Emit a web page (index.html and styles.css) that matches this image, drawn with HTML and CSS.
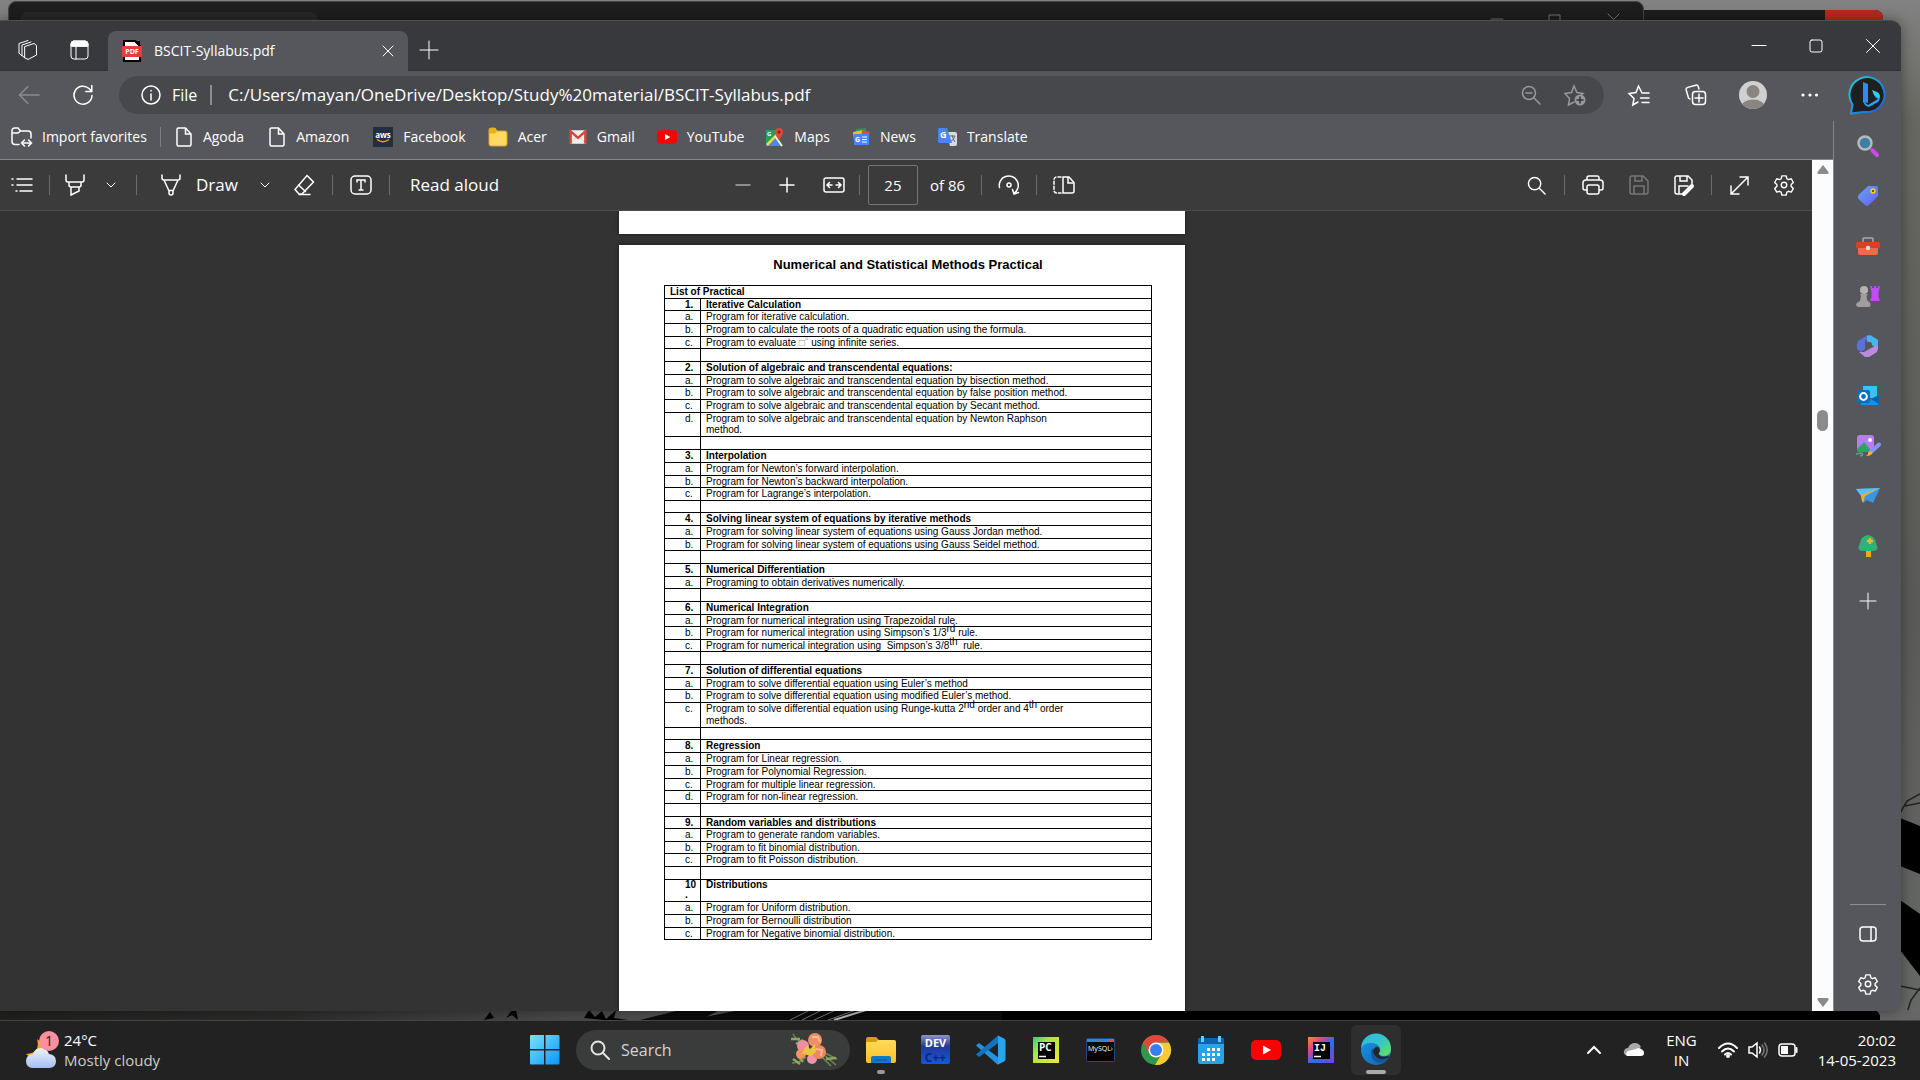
FILE: index.html
```html
<!DOCTYPE html>
<html lang="en">
<head>
<meta charset="utf-8">
<title>BSCIT-Syllabus.pdf</title>
<link rel="stylesheet" href="styles.css">
</head>
<body>
<svg class="defs" aria-hidden="true">
  <defs>
    <symbol id="gear" viewBox="0 0 24 24"><path d="M9.6 2h4.8l.7 3.2 1.7 1 3.1-1 2.3 4.100-2.400 2.200v2l2.400 2.200-2.300 4.100-3.100-1-1.700 1-.7 3.200H9.600l-.7-3.200-1.700-1-3.100 1-2.300-4.100 2.400-2.200v-2L1.800 9.300l2.300-4.100 3.100 1 1.700-1z" stroke-linejoin="round"/><circle cx="12" cy="12" r="3"/></symbol>
    <symbol id="file" viewBox="0 0 16 20"><path d="M2.500 1h7l5.500 6v10.500a1.500 1.500 0 0 1-1.500 1.500h-11A1.500 1.500 0 0 1 1 17.500v-15A1.500 1.500 0 0 1 2.500 1zM9.500 1v6H15"/></symbol>
    <symbol id="yt" viewBox="0 0 30 20"><rect width="30" height="20" rx="5" fill="#f00"/><path d="M12 5.500v9l8-4.500z" fill="#fff"/></symbol>
    <symbol id="lens" viewBox="0 0 20 20"><circle cx="8" cy="8" r="6.500"/><path d="M13 13l6 6"/></symbol>
    <linearGradient id="edgeA" x1="0" y1="0" x2="1" y2="1"><stop offset="0" stop-color="#2fb4e8"/><stop offset=".5" stop-color="#35c6c9"/><stop offset="1" stop-color="#6be24e"/></linearGradient>
    <linearGradient id="edgeB" x1="0" y1="0" x2="1" y2="1"><stop offset="0" stop-color="#1899e0"/><stop offset="1" stop-color="#1160b7"/></linearGradient>
    <linearGradient id="win" x1="0" y1="0" x2="1" y2="1"><stop offset="0" stop-color="#7be0fb"/><stop offset="1" stop-color="#0a95fb"/></linearGradient>
    <linearGradient id="bing" x1="0" y1="0" x2="1" y2="1"><stop offset="0" stop-color="#1fd0e0"/><stop offset="1" stop-color="#1c55e0"/></linearGradient>
    <linearGradient id="dev" x1="0" y1="0" x2="0" y2="1"><stop offset="0" stop-color="#8f95c4"/><stop offset=".4" stop-color="#24379a"/><stop offset="1" stop-color="#1259e0"/></linearGradient>
    <linearGradient id="pc" x1="0" y1="0" x2="1" y2="1"><stop offset="0" stop-color="#21d789"/><stop offset=".35" stop-color="#a6e83c"/><stop offset="1" stop-color="#f3e63b"/></linearGradient>
    <linearGradient id="ij" x1="0" y1="0" x2="1" y2="1"><stop offset="0" stop-color="#fc8a2e"/><stop offset=".3" stop-color="#e0408a"/><stop offset=".55" stop-color="#2b6df0"/><stop offset="1" stop-color="#8040d0"/></linearGradient>
    <linearGradient id="tag" x1="0" y1="0" x2="1" y2="1"><stop offset="0" stop-color="#5fa8f5"/><stop offset="1" stop-color="#6a5cf0"/></linearGradient>
    <linearGradient id="fold" x1="0" y1="0" x2="0" y2="1"><stop offset="0" stop-color="#ffda5c"/><stop offset="1" stop-color="#fcc024"/></linearGradient>
    <linearGradient id="cloud" x1="0" y1="0" x2="0" y2="1"><stop offset="0" stop-color="#eef4ff"/><stop offset="1" stop-color="#a4bff0"/></linearGradient>
  </defs>
</svg>

<div class="desktop">
  <svg class="wall-right" viewBox="0 0 20 1020" preserveAspectRatio="none" aria-hidden="true">
    <path d="M0 818l20 8v48l-20-8zM0 900l20 14v62l-20-26z" fill="#000"/>
    <path d="M0 813l7-12 13-7M5 806l15-3M0 986l20 4M6 1016l5-16 9-12" fill="none" stroke="#222" stroke-width="1.500"/>
  </svg>
  <svg class="wall-bottom" viewBox="0 0 1920 10" preserveAspectRatio="none" aria-hidden="true">
    <path d="M484 10l6-8 4 6zM506 8l6-8 4 0 2 10-6-5zM584 8l5-8 6 7 7-6 4 8 10-9-2 8 14 2h-24z" fill="#000"/>
    <path d="M640 10l40-10h40l-20 10zM690 10l50-10h262v10z" fill="#0b0b0b"/>
    <path d="M790 10l20-10M802 10l20-10M814 10l22-10M828 10l28-10" stroke="#777" stroke-width="1"/>
    <path d="M834 10l32-10" stroke="#bbb" stroke-width="2"/>
    <path d="M1002 0h870q8 0 8 8v2h-878z" fill="#000"/>
  </svg>
  <div class="back-window far"><span class="red-close"></span></div>
  <div class="back-window near">
    <span class="back-tab"></span>
    <svg width="172" height="18" viewBox="0 0 172 18" class="ln" aria-hidden="true"><path d="M20 17h12M78 20v-7h11v7M137 12l11 11M148 12l-11 11"/></svg>
  </div>

  <main class="browser">
    <header class="tabs">
      <button class="ic" aria-label="Workspaces"><svg class="ln" width="22" height="22" viewBox="0 0 22 22"><path d="M9 7.500l9-3 2.500 2v9.500L12 20.500 9 19zM6 16.500V6l9-3M3 14V4.500L12 1.500M3 14l3 3M6 16.500l3 2.500"/></svg></button>
      <button class="ic" aria-label="Tab actions"><svg class="ln" width="20" height="20" viewBox="0 0 20 20"><rect x="1" y="1" width="17" height="18" rx="3"/><path d="M6 6v13"/><path d="M1 6V4q0-3 3-3h11q3 0 3 3v2z" fill="#fff"/></svg></button>
      <div class="tab">
        <svg width="20" height="20" viewBox="0 0 20 20" aria-hidden="true"><path d="M2 0h11l5 5v15H2z" fill="#fff" stroke="#000" stroke-width="2"/><path d="M12 0l6 6V0z" fill="#000"/><rect y="5" width="20" height="11" rx="1" fill="#e93c3c"/><text x="10" y="13" font-size="7" text-anchor="middle" class="svgb" fill="#fff">PDF</text></svg>
        <span class="tab-title">BSCIT-Syllabus.pdf</span>
        <button class="tab-close" aria-label="Close tab"><svg class="ln" width="12" height="12" viewBox="0 0 12 12"><path d="M1 1l10 10M11 1L1 11"/></svg></button>
      </div>
      <button class="newtab" aria-label="New tab"><svg class="ln" width="18" height="18" viewBox="0 0 18 18"><path d="M9 0v18M0 9h18"/></svg></button>
      <div class="caption">
        <button aria-label="Minimize"><svg class="ln" width="14" height="14" viewBox="0 0 14 14"><path d="M0 6.500h14"/></svg></button>
        <button aria-label="Maximize"><svg class="ln" width="14" height="14" viewBox="0 0 14 14"><rect x="1" y="1" width="12" height="12" rx="2"/></svg></button>
        <button aria-label="Close"><svg class="ln" width="14" height="14" viewBox="0 0 14 14"><path d="M.5.5l13 13M13.500.5l-13 13"/></svg></button>
      </div>
    </header>

    <div class="frame">
      <div class="column">
        <nav class="address-row">
          <button class="nav dim" aria-label="Back"><svg class="ln thick" width="22" height="20" viewBox="0 0 22 20"><path d="M21 10H2M10 1.500L1.500 10l8.500 8.500"/></svg></button>
          <button class="nav" aria-label="Refresh"><svg class="ln thick" width="20" height="20" viewBox="0 0 20 20"><path d="M19 10.500A9 9 0 1 1 16 3.500L18.500 6M18.800.5V6.500h-6"/></svg></button>
          <div class="pill">
            <svg class="ln thick" width="20" height="20" viewBox="0 0 20 20" aria-hidden="true"><circle cx="10" cy="10" r="9"/><path d="M10 9v6M10 5.500v.5"/></svg>
            <span class="scheme">File</span>
            <input class="url" aria-label="Address" value="C:/Users/mayan/OneDrive/Desktop/Study%20material/BSCIT-Syllabus.pdf">
            <button class="pill-btn" aria-label="Zoom out"><svg class="ln thick" width="20" height="20" viewBox="0 0 20 20"><circle cx="8" cy="8" r="6.500"/><path d="M13 13l6 6M5 8h6"/></svg></button>
            <button class="pill-btn" aria-label="Add to favorites"><svg class="ln thick" width="22" height="22" viewBox="0 0 22 22"><path d="M10 18l-5.500 3 1-6.500L1 9.500l6.500-1L10 2l3 6.500 6 1-2 1.500"/><circle cx="16" cy="16" r="5.500" fill="#97989a" stroke="none"/><path d="M16 13v6M13 16h6" stroke="#333"/></svg></button>
          </div>
          <div class="tools">
            <button aria-label="Favorites"><svg class="ln thick" width="22" height="22" viewBox="0 0 22 22"><path d="M21 9h-7l-3.500-7L8 8.500l-7 1 5 5-1.200 6.500L10 18M12.500 14H21M14 18.500h7"/></svg></button>
            <button aria-label="Collections"><svg class="ln thick" width="22" height="22" viewBox="0 0 22 22"><rect x="7.500" y="7.500" width="13" height="13" rx="3"/><path d="M14 10v8M10 14h8M5 15L3.500 14 1.200 6q-.4-2 1.500-2.600l8-2.200q2-.5 2.600 1.500L14 5"/></svg></button>
            <button aria-label="Profile"><svg width="28" height="28" viewBox="0 0 28 28"><clipPath id="av"><circle cx="14" cy="14" r="14"/></clipPath><g clip-path="url(#av)"><rect width="28" height="28" fill="#d2d0ce"/><circle cx="14" cy="10.500" r="6.500" fill="#8a8583"/><ellipse cx="14" cy="26" rx="12" ry="7.500" fill="#8a8583"/></g></svg></button>
            <button aria-label="Settings and more"><svg width="18" height="6" viewBox="0 0 18 6" fill="#fff"><circle cx="2" cy="3" r="1.600"/><circle cx="9" cy="3" r="1.600"/><circle cx="15.500" cy="3" r="1.600"/></svg></button>
          </div>
        </nav>

        <nav class="bookmarks">
          <a href="#"><svg class="ln thick" width="21" height="20" viewBox="0 0 21 20"><path d="M8 17.500H4A3 3 0 0 1 1 14.500v-11A2.500 2.500 0 0 1 3.500 1H7l2.500 3H17a3 3 0 0 1 3 3v4M1 6h6l2.500-2M11 16h9M13.500 13L10.500 16l3 3M17.500 13l3 3-3 3"/></svg>Import favorites</a>
          <span class="bm-sep"></span>
          <a href="#" class="site"><svg class="ln thick" width="18" height="20"><use href="#file"/></svg>Agoda</a>
          <a href="#" class="site"><svg class="ln thick" width="18" height="20"><use href="#file"/></svg>Amazon</a>
          <a href="#"><svg width="20" height="20" viewBox="0 0 20 20"><rect width="20" height="20" fill="#222e3e"/><text x="10" y="11" font-size="8" text-anchor="middle" class="svgb" fill="#fff">aws</text><path d="M4 12.500q6 4.500 12 0" fill="none" stroke="#f79a1e" stroke-width="1.500"/></svg>Facebook</a>
          <a href="#"><svg width="20" height="20" viewBox="0 0 20 20"><path d="M1 3q0-2 2-2h4l2 3h8q2 0 2 2v11q0 2-2 2H3q-2 0-2-2z" fill="#ffd966" stroke="#d9a514"/><path d="M1 6.500h6l2-2.500-2-3H3Q1 1 1 3z" fill="#e8b21c"/></svg>Acer</a>
          <a href="#"><svg width="18" height="16" viewBox="0 0 19 16"><path d="M1 1h17v14H1z" fill="#f0f0f0"/><path d="M1 15l7-7M18 15l-7-7" stroke="#ccc"/><path d="M1.800 15V2l7.700 7 7.700-7v13" fill="none" stroke="#d9453a" stroke-width="2.500"/></svg>Gmail</a>
          <a href="#"><svg width="20" height="14"><use href="#yt"/></svg>YouTube</a>
          <a href="#"><svg width="18" height="18" viewBox="0 0 18 18"><path d="M0 2h12v14H0z" fill="#25a05a"/><path d="M0 16L9 8l8 10H0z" fill="#4a86f0"/><path d="M0 16L10 6l3 0-11 12z" fill="#fbd34a"/><path d="M9 8l7 10" stroke="#eee" stroke-width="2"/><path d="M13 12Q9 7 9 4a4 4 0 0 1 8 0q0 3-4 8z" fill="#e0473a"/><circle cx="13" cy="4" r="1.500" fill="#7d231c"/><text x="1" y="8" font-size="6" class="svgb" fill="#fff">G</text></svg>Maps</a>
          <a href="#"><svg width="18" height="18" viewBox="0 0 18 18"><path d="M4 1l10-1v8H4z" fill="#1e9b57"/><path d="M1 4l10-2 2 8-11 2z" fill="#f9bd1b"/><path d="M10 2l8 2-2 7H9z" fill="#e2483c"/><rect x="2" y="6" width="15" height="11" rx="1" fill="#4a86f0"/><text x="3" y="14" font-size="7" class="svgb" fill="#fff">G</text><path d="M10 9h5M10 11.500h5M10 14h5" stroke="#fff"/></svg>News</a>
          <a href="#"><svg width="19" height="20" viewBox="0 0 19 20"><path d="M8 5h9q2 0 2 2v10q0 2-2 2h-5z" fill="#d9dbe0"/><path d="M11 9h6M14 8q1 4 3 7M17 9q-1 4-5 6" stroke="#667" fill="none"/><path d="M1 1h8l5 15H2q-2 0-2-2V3q0-2 1-2z" fill="#4a86f0"/><text x="2" y="11" font-size="9" class="svgb" fill="#fff">G</text></svg>Translate</a>
        </nav>

        <section class="viewer-wrap">
          <div class="viewer">
            <div class="pdfbar">
              <div class="pdf-group side">
                <button class="contents" aria-label="Contents"><svg class="ln thick" width="22" height="16" viewBox="0 0 22 16"><path d="M6 2h15M6 8h15M9 14h12M1 2h1M1 8h1M5 14h1"/></svg></button>
                <i class="sep"></i>
                <button class="w50" aria-label="Highlight"><svg class="ln thick" width="20" height="22" viewBox="0 0 20 22"><path d="M1 1v5q0 2 2 2h14q2 0 2-2V1M4 8v3q0 2 2 2h8q2 0 2-2V8M6 13v8l8-4v-4"/></svg></button>
                <button class="w22" aria-label="Highlight options"><svg class="ln" width="10" height="6" viewBox="0 0 10 6"><path d="M1 1l4 4 4-4"/></svg></button>
                <i class="sep gap14"></i>
                <button class="draw"><svg class="ln thick" width="20" height="22" viewBox="0 0 20 22"><path d="M1 1v3q0 2 2 2h14q2 0 2-2V1M3 6l5 11v2q0 2 2 2t2-2v-2l5-11M8 16.500h4"/></svg>Draw</button>
                <button class="w22" aria-label="Draw options"><svg class="ln" width="10" height="6" viewBox="0 0 10 6"><path d="M1 1l4 4 4-4"/></svg></button>
                <button class="w56" aria-label="Erase"><svg class="ln thick" width="21" height="22" viewBox="0 0 21 22"><path d="M13 1.500l6.500 6.500L8 20H5L1 15.500zM4.500 11l7 6.500M5 20.500h11"/></svg></button>
                <i class="sep"></i>
                <button class="w56" aria-label="Add text"><svg class="ln thick" width="22" height="20" viewBox="0 0 22 20"><rect x="1" y="1" width="20" height="18" rx="4"/><path d="M7 7V5h8v2M11 5v10M9 15h4"/></svg></button>
                <i class="sep"></i>
                <button class="read">Read aloud</button>
              </div>
              <div class="pdf-group">
                <button class="w44" aria-label="Zoom out"><svg class="ln thick dim" width="14" height="14" viewBox="0 0 14 14"><path d="M0 7h14"/></svg></button>
                <button class="w44" aria-label="Zoom in"><svg class="ln thick" width="14" height="14" viewBox="0 0 14 14"><path d="M0 7h14M7 0v14"/></svg></button>
                <button class="w50" aria-label="Fit to width"><svg class="ln thick" width="22" height="16" viewBox="0 0 22 16"><rect x="1" y="1" width="20" height="14" rx="2"/><path d="M4 8h5M13 8h5M6.500 5.500L4 8l2.500 2.500M15.500 5.500L18 8l-2.500 2.500"/></svg></button>
                <i class="sep"></i>
                <label class="pageno"><input value="25" aria-label="Page number"><span>of 86</span></label>
                <i class="sep"></i>
                <button class="w54" aria-label="Rotate"><svg class="ln thick" width="22" height="22" viewBox="0 0 22 22"><path d="M1.500 13.500A9.500 9.500 0 1 1 16.500 19M14.500 15.500l1.500 4.500 4.500-1.500"/><circle cx="11" cy="11" r="2"/></svg></button>
                <i class="sep"></i>
                <button class="w54" aria-label="Page view"><svg class="ln thick" width="22" height="18" viewBox="0 0 22 18"><path d="M8 1H4Q1 1 1 4v10q0 3 3 3h4" stroke-dasharray="3 2"/><path d="M10 1h6l5 5.500V15q0 2-2 2h-9zM15 1v6h6"/></svg></button>
              </div>
              <div class="pdf-group side end">
                <button class="w56" aria-label="Find"><svg class="ln thick" width="19" height="19"><use href="#lens"/></svg></button>
                <i class="sep"></i>
                <button class="w56" aria-label="Print"><svg class="ln thick" width="22" height="20" viewBox="0 0 22 20"><path d="M5 15H3q-2 0-2-2V8q0-3 3-3h14q3 0 3 3v5q0 2-2 2h-2M5 5V3q0-2 2-2h8q2 0 2 2v2"/><rect x="5" y="10" width="12" height="9" rx="2"/></svg></button>
                <button class="w36 dim" aria-label="Save"><svg class="ln thick" width="20" height="20" viewBox="0 0 20 20"><path d="M3 1h11l5 5v11q0 2-2 2H3q-2 0-2-2V3q0-2 2-2zM6 1v5h7V1M5 19v-8h10v8"/></svg></button>
                <button class="w54" aria-label="Save as"><svg class="ln thick" width="20" height="20" viewBox="0 0 20 20"><path d="M8 19H3q-2 0-2-2V3q0-2 2-2h11l4 4v4M6 1v5h7V1M5 18v-7h9"/><path d="M10 19l8-8" stroke-width="4"/></svg></button>
                <i class="sep"></i>
                <button class="w54" aria-label="Full screen"><svg class="ln thick" width="19" height="19" viewBox="0 0 19 19"><path d="M1.500 17.500l16-16M10 1h8v8M1 10v8h8"/></svg></button>
                <button class="w36" aria-label="Settings"><svg class="ln thick" width="22" height="22"><use href="#gear"/></svg></button>
              </div>
            </div>
            <div class="pages">
              <div class="page previous"></div>
              <article class="page">
                <h1>Numerical and Statistical Methods Practical</h1>
                <table>
                  <colgroup><col class="num"><col></colgroup>
                  <tbody>
                  <tr><th colspan="2" class="list">List of Practical</th></tr>
                  <tr class="t"><th>1.</th><th>Iterative Calculation</th></tr>
                  <tr><td>a.</td><td>Program for iterative calculation.</td></tr>
                  <tr><td>b.</td><td>Program to calculate the roots of a quadratic equation using the formula.</td></tr>
                  <tr class="t"><td>c.</td><td>Program to evaluate <span class="glyph">□<sup>▫</sup></span> using infinite series.</td></tr>
                  <tr><td></td><td></td></tr>
                  <tr><th>2.</th><th>Solution of algebraic and transcendental equations:</th></tr>
                  <tr class="t"><td>a.</td><td>Program to solve algebraic and transcendental equation by bisection method.</td></tr>
                  <tr><td>b.</td><td>Program to solve algebraic and transcendental equation by false position method.</td></tr>
                  <tr><td>c.</td><td>Program to solve algebraic and transcendental equation by Secant method.</td></tr>
                  <tr class="two"><td>d.</td><td>Program to solve algebraic and transcendental equation by Newton Raphson<br>method.</td></tr>
                  <tr><td></td><td></td></tr>
                  <tr><th>3.</th><th>Interpolation</th></tr>
                  <tr><td>a.</td><td>Program for Newton’s forward interpolation.</td></tr>
                  <tr class="t"><td>b.</td><td>Program for Newton’s backward interpolation.</td></tr>
                  <tr><td>c.</td><td>Program for Lagrange’s interpolation.</td></tr>
                  <tr class="t"><td></td><td></td></tr>
                  <tr><th>4.</th><th>Solving linear system of equations by iterative methods</th></tr>
                  <tr><td>a.</td><td>Program for solving linear system of equations using Gauss Jordan method.</td></tr>
                  <tr class="t"><td>b.</td><td>Program for solving linear system of equations using Gauss Seidel method.</td></tr>
                  <tr><td></td><td></td></tr>
                  <tr><th>5.</th><th>Numerical Differentiation</th></tr>
                  <tr class="t"><td>a.</td><td>Programing to obtain derivatives numerically.</td></tr>
                  <tr><td></td><td></td></tr>
                  <tr><th>6.</th><th>Numerical Integration</th></tr>
                  <tr class="t"><td>a.</td><td>Program for numerical integration using Trapezoidal rule.</td></tr>
                  <tr><td>b.</td><td>Program for numerical integration using Simpson’s 1/3<sup>rd</sup> rule.</td></tr>
                  <tr class="t"><td>c.</td><td>Program for numerical integration using&nbsp; Simpson’s 3/8<sup>th</sup>&nbsp; rule.</td></tr>
                  <tr><td></td><td></td></tr>
                  <tr><th>7.</th><th>Solution of differential equations</th></tr>
                  <tr class="t"><td>a.</td><td>Program to solve differential equation using Euler’s method</td></tr>
                  <tr><td>b.</td><td>Program to solve differential equation using modified Euler’s method.</td></tr>
                  <tr class="two tall"><td>c.</td><td>Program to solve differential equation using Runge-kutta 2<sup>nd</sup> order and 4<sup>th</sup> order<br>methods.</td></tr>
                  <tr class="t"><td></td><td></td></tr>
                  <tr><th>8.</th><th>Regression</th></tr>
                  <tr><td>a.</td><td>Program for Linear regression.</td></tr>
                  <tr><td>b.</td><td>Program for Polynomial Regression.</td></tr>
                  <tr class="t"><td>c.</td><td>Program for multiple linear regression.</td></tr>
                  <tr><td>d.</td><td>Program for non-linear regression.</td></tr>
                  <tr><td></td><td></td></tr>
                  <tr class="t"><th>9.</th><th>Random variables and distributions</th></tr>
                  <tr><td>a.</td><td>Program to generate random variables.</td></tr>
                  <tr class="t"><td>b.</td><td>Program to fit binomial distribution.</td></tr>
                  <tr><td>c.</td><td>Program to fit Poisson distribution.</td></tr>
                  <tr><td></td><td></td></tr>
                  <tr class="ten"><th>10<br>.</th><th>Distributions</th></tr>
                  <tr><td>a.</td><td>Program for Uniform distribution.</td></tr>
                  <tr><td>b.</td><td>Program for Bernoulli distribution</td></tr>
                  <tr class="t"><td>c.</td><td>Program for Negative binomial distribution.</td></tr>
                  </tbody>
                </table>
              </article>
            </div>
          </div>
          <div class="scroll" aria-hidden="true">
            <svg width="12" height="9" viewBox="0 0 12 9"><path d="M6 0l5.500 7q.5 2-1 2h-9Q0 9 .5 7z" fill="#8b8b8b"/></svg>
            <div class="track"><div class="above"></div><div class="thumb"></div><div class="below"></div></div>
            <svg width="12" height="9" viewBox="0 0 12 9"><path d="M6 9L.5 2Q0 0 1.500 0h9q1.500 0 1 2z" fill="#8b8b8b"/></svg>
          </div>
        </section>
      </div>

      <aside class="sidebar">
        <button class="bing" aria-label="Discover"><svg width="38" height="40" viewBox="-2 0 38 40"><path d="M1 37.500l1.500-9A17.500 17.500 0 1 1 19.500 36q-4 0-6 0z" fill="#1f1f1f" stroke="url(#bing)" stroke-width="2"/><path d="M13 6l5 2v19l-5-1z" fill="#2f8bf2"/><path d="M13 25q1 5 6 6l9-5q3-3 1-7l-6-3 2 5 3 2-10 6z" fill="#2ba2f0"/><path d="M22 14l5 2q4 2 2.500 6L24 19z" fill="#2fd3e4"/></svg></button>
        <div class="side-list">
          <button aria-label="Search"><svg width="22" height="22" viewBox="0 0 22 22"><path d="M14 14l3 3" stroke="#aaa" stroke-width="2"/><circle cx="8" cy="8" r="6.500" fill="#3a80a8" stroke="#b9b9b9" stroke-width="2.500"/><path d="M15.500 15.500l4.500 4.500" stroke="#cf45ee" stroke-width="4" stroke-linecap="round"/></svg></button>
          <button aria-label="Shopping"><svg width="22" height="22" viewBox="0 0 22 22"><path d="M11 1h8q2 0 2 2v8L12 20q-2 2-4 0l-6.500-6q-1.500-2 0-4z" fill="url(#tag)"/><circle cx="16" cy="6" r="2.800" fill="#f4c71d"/><circle cx="16" cy="6" r="1" fill="#333"/></svg></button>
          <button aria-label="Tools"><svg width="24" height="18" viewBox="0 0 24 18"><path d="M7 5V2q0-1 1-1h8q1 0 1 1v3" fill="none" stroke="#a9a9a9" stroke-width="1.500"/><path d="M2 10h20v6q0 2-2 2H4q-2 0-2-2z" fill="#ef6b45"/><rect y="5" width="24" height="6" rx="1" fill="#d2451e"/><circle cx="12" cy="11" r="2.200" fill="#ddd"/></svg></button>
          <button aria-label="Games"><svg width="24" height="22" viewBox="0 0 24 22"><path d="M14 1h2v2h2V1h2v2h2V1h2l-1.500 6v5l1.500 4H14l1.500-4V7z" fill="#c04cf5"/><circle cx="8" cy="5" r="4" fill="#b5b3b1"/><path d="M4 9h8l-1.500 2 1 5q3 1 3 3.500T13 22H2q-2-1-2-2.500T4 16l1-5z" fill="#a19f9d"/></svg></button>
          <button aria-label="Microsoft 365"><svg width="24" height="22" viewBox="0 0 24 22"><path d="M2 6l9-5.500h6L9 6v8l-4 3-4-3q-1-4 1-8z" fill="#5b70d8"/><path d="M11 .5h4l7 4.500v9l-6-4q0-4-5-3z" fill="#43b7ec"/><path d="M22 10v4l-1 3-8 5H9l-6-5 5 0 9-5z" fill="#b98ade"/></svg></button>
          <button aria-label="Outlook"><svg width="22" height="20" viewBox="0 0 22 20"><path d="M6 0h14v12H6z" fill="#37c2f2"/><path d="M4 19V9l8 5 10-5v8q0 2-2 2z" fill="#1a8fdd"/><path d="M22 9v9l-8-5z" fill="#0f5fa8"/><rect y="4" width="13" height="13" rx="2" fill="#0e6cc4"/><circle cx="6.500" cy="10.500" r="3.400" fill="none" stroke="#fff" stroke-width="2"/></svg></button>
          <button aria-label="Image creator"><svg width="24" height="22" viewBox="0 0 24 22"><rect x="1" width="17" height="17" rx="3" fill="#b67cf3"/><path d="M1 14l7-7 8 10H4q-3 0-3-3z" fill="#2aa564"/><circle cx="14" cy="5" r="2" fill="#fff"/><path d="M23 9.500L15 17" stroke="#8694f5" stroke-width="4" stroke-linecap="round"/><path d="M9 21q4-1 3-4l4-1q2 5-7 5z" fill="#f0b23a"/><path d="M0 19l6-1q2 2-2 3" fill="none" stroke="#36ba78" stroke-width="1.500"/></svg></button>
          <button aria-label="Drop"><svg width="24" height="16" viewBox="0 0 24 16"><path d="M0 1l24-1-7 15-6-3-4 3-2-8z" fill="#3895e8"/><path d="M0 1l24-1L5 8z" fill="#5cc0f6"/><path d="M5 7L24 0 9 8l-2 7q-2-3-2-8z" fill="#efb12b"/></svg></button>
          <button aria-label="E-tree"><svg width="20" height="22" viewBox="0 0 20 22"><rect x="8" y="14" width="5" height="8" fill="#f0a823"/><path d="M10 0q7 1 8 8 4 8-3 8H5Q-2 16 2 8q1-7 8-8z" fill="#2fb177"/><path d="M12 3v6M9 6h6" stroke="#f6b52a" stroke-width="2.500"/></svg></button>
          <button aria-label="Customize"><svg class="ln" width="16" height="16" viewBox="0 0 16 16"><path d="M8 0v16M0 8h16"/></svg></button>
        </div>
        <div class="side-foot">
          <button aria-label="Hide sidebar"><svg class="ln thick" width="18" height="16" viewBox="0 0 18 16"><rect x="1" y="1" width="16" height="14" rx="3"/><path d="M12 1v14"/></svg></button>
          <button aria-label="Settings"><svg class="ln thick" width="22" height="22"><use href="#gear"/></svg></button>
        </div>
      </aside>
    </div>
  </main>
</div>

<footer class="taskbar">
  <button class="weather">
    <svg width="32" height="38" viewBox="0 0 32 38" aria-hidden="true"><path d="M12 8q4 14-11 15 6 6 13 2t5-11z" fill="#f5a52b"/><path d="M7 37q-6-1-6-7t7-7q2-6 8-6t8 6q7 1 7 7t-6 7z" fill="url(#cloud)"/><circle cx="24" cy="10" r="10" fill="#fc8f9e"/><text x="24" y="15" font-size="14" text-anchor="middle" fill="#222">1</text></svg>
    <span class="lines"><span>24°C</span><span class="soft">Mostly cloudy</span></span>
  </button>
  <nav class="apps">
    <button aria-label="Start"><svg width="30" height="30" viewBox="0 0 30 30"><path d="M0 1q0-1 1-1h13v14H0zM15.500 0H28q1.500 0 1.500 1v13h-14zM0 15.500h14V29.500H1q-1 0-1-1zM15.500 15.500h14V28q0 1.500-1 1.500h-13z" fill="url(#win)"/></svg></button>
    <label class="search"><svg class="ln" width="20" height="20"><use href="#lens"/></svg><input placeholder="Search" aria-label="Search">
      <svg width="48" height="34" viewBox="0 0 48 34" aria-hidden="true"><path d="M3 1q4 8 14 10M2 30q8 0 14-6M34 22l12 10M32 24l9 9M35 20l12 6" fill="none" stroke="#6d8c4a" stroke-width="1.500"/><path d="M1 6l9 0M6 11l7-4M3 26l7 5M8 23l5 6M36 26l10-1" stroke="#8ba763" stroke-width="2.500"/><circle cx="13" cy="13" r="6" fill="#f08ea0"/><circle cx="11" cy="21" r="5" fill="#f1955f"/><circle cx="25" cy="7" r="7" fill="#ee9065"/><circle cx="22" cy="26" r="5" fill="#ef93ad"/><circle cx="29" cy="19" r="7" fill="#ec8762"/><path d="M12 20l5-8 3 4 5-5 1 8-5 4-4-1z" fill="#efc342"/><path d="M22 4l6 0 2 5M26 16l6 1-1 6" fill="none" stroke="#f8bb8b" stroke-width="2"/></svg>
    </label>
    <button class="open" aria-label="File Explorer"><svg width="30" height="28" viewBox="0 0 30 28"><path d="M0 3q0-2 2-2h8l3 3h15v10H0z" fill="#d99a13"/><path d="M0 6h10l2-2h16q2 0 2 2v19q0 2-2 2H2q-2 0-2-2z" fill="url(#fold)"/><path d="M5 27v-5q0-2 2-2h16q2 0 2 2v5z" fill="#1077cf"/><path d="M9 24h12" stroke="#0a4f94"/></svg></button>
    <button aria-label="Dev-C++"><svg width="29" height="29" viewBox="0 0 29 29"><rect width="29" height="29" rx="2" fill="url(#dev)"/><text x="14.500" y="12" font-size="11" text-anchor="middle" class="svgb" fill="#fff">DEV</text><text x="14.500" y="27" font-size="12" text-anchor="middle" class="svgb" fill="#12276a">C++</text></svg></button>
    <button aria-label="Visual Studio Code"><svg width="30" height="30" viewBox="0 0 30 30"><path d="M0 10.500l3-2.500 20 15-1 7z" fill="#2193e0"/><path d="M0 19.500l3 2.500L23 7.500 22 .5z" fill="#0e75c5"/><path d="M22 .5l6 3q1.500 1 1.500 2v19q0 1-1.500 2l-6 3z" fill="#29a5f0"/></svg></button>
    <button aria-label="PyCharm"><svg width="26" height="26" viewBox="0 0 26 26"><rect width="26" height="26" fill="url(#pc)"/><rect x="5" y="5" width="17" height="17" fill="#000"/><text x="6" y="14" font-size="10" class="svgb" fill="#fff">PC</text><path d="M6 19.500h7" stroke="#fff" stroke-width="1.500"/></svg></button>
    <button aria-label="MySQL"><svg width="29" height="24" viewBox="0 0 29 24"><rect x=".5" y=".5" width="28" height="23" rx="1" fill="#050505" stroke="#1d4a85"/><path d="M1 1h27v3H1z" fill="#3585d6"/><path d="M24 1h4v2h-4z" fill="#d55"/><text x="14.500" y="13" font-size="7" text-anchor="middle" fill="#fff">MySQL›</text></svg></button>
    <button aria-label="Chrome"><svg width="30" height="30" viewBox="0 0 30 30"><circle cx="15" cy="15" r="15" fill="#2d9a4b"/><path d="M28 7.500A15 15 0 0 1 14 30l7.500-12.500L15 7.500z" fill="#fbc934"/><path d="M2 7.500A15 15 0 0 1 28 7.500H15L8.500 19z" fill="#dd4a3c"/><circle cx="15" cy="15" r="7.500" fill="#fff"/><circle cx="15" cy="15" r="6" fill="#3b7de9"/></svg></button>
    <button aria-label="Calendar"><svg width="26" height="28" viewBox="0 0 26 28"><rect y="2" width="26" height="26" rx="2" fill="#28a3e8"/><path d="M0 8V4q0-2 2-2h22q2 0 2 2v4z" fill="#0f62ab"/><path d="M4.500 0v6M21.500 0v6" stroke="#5fd0f8" stroke-width="3"/><path d="M9 12h3v3H9zM14 12h3v3h-3zM19 12h3v3h-3zM4 17h3v3H4zM9 17h3v3H9zM14 17h3v3h-3zM19 17h3v3h-3zM4 22h3v3H4zM9 22h3v3H9zM14 22h3v3h-3z" fill="#fff"/></svg></button>
    <button aria-label="YouTube"><svg width="30" height="20"><use href="#yt"/></svg></button>
    <button aria-label="IntelliJ IDEA"><svg width="26" height="26" viewBox="0 0 26 26"><rect width="26" height="26" fill="url(#ij)"/><rect x="5" y="5" width="17" height="17" fill="#000"/><text x="6" y="14" font-size="10" class="svgm" fill="#fff">IJ</text><path d="M6 19.500h7" stroke="#fff" stroke-width="1.500"/></svg></button>
    <button class="active" aria-label="Microsoft Edge"><svg width="30" height="30" viewBox="0 0 30 30"><circle cx="15" cy="15" r="15" fill="url(#edgeB)"/><path d="M0 13A15 15 0 0 1 30 14q0 7-7 7-5 0-5-3 2-2 1-5-2-5-9-5-7 0-10 5z" fill="url(#edgeA)"/><path d="M10 17q0 10 9 11 6-1 9-6-5 3-10 2-6-2-6-7 0-3 3-4-5 0-5 4z" fill="#1454a0"/><path d="M14 13q-4 3 0 8t13 2q2-2 0-2-6 2-9-1-1-1 0-2 2-4-1-6-2-1-3 1z" fill="#242626"/></svg></button>
  </nav>
  <div class="tray">
    <button aria-label="Show hidden icons"><svg class="ln heavy" width="14" height="8" viewBox="0 0 14 8"><path d="M1 7l6-6 6 6"/></svg></button>
    <button aria-label="OneDrive"><svg width="20" height="14" viewBox="0 0 20 14"><path d="M3 13q-4-2-3-5 1-3 4-3 2-5 7-5 4 0 6 4l-5 4z" fill="#a9a9a9"/><path d="M3 13q-2-3 1-5l8-2q3-2 5 0 3 1 3 4t-3 3z" fill="#fff"/></svg></button>
    <button class="lang"><span>ENG</span><span>IN</span></button>
    <button class="status" aria-label="Network, volume and battery">
      <svg class="ln heavy" width="20" height="16" viewBox="0 0 20 16"><path d="M1 6q9-9 18 0M4 9.500q6-6 12 0M7 12.500q3-3 6 0"/><circle cx="10" cy="14" r="1" fill="#fff"/></svg>
      <svg class="ln thick" width="20" height="18" viewBox="0 0 20 18"><path d="M1 6h3l5-4v14l-5-4H1zM11.500 6q2 3 0 6"/><path d="M14 4q4 5 0 10M16.500 2q5.500 7 0 14" stroke="#777"/></svg>
      <svg class="ln thick" width="20" height="14" viewBox="0 0 20 14"><rect x="1" y="1" width="16" height="12" rx="3"/><path d="M3 3h7v8H3z" fill="#fff" stroke="none"/><path d="M18.500 5v4" stroke-width="2"/></svg>
    </button>
    <button class="clock"><span>20:02</span><span>14-05-2023</span></button>
  </div>
</footer>
</body>
</html>
```

FILE: styles.css
```css
* { box-sizing: border-box; }

body {
  margin: 0;
  height: 100vh;
  display: flex;
  flex-direction: column;
  overflow: hidden;
  background: #222;
  color: #fff;
  font: 14px/20px "Open Sans", "Noto Sans", sans-serif;
}

button, input {
  font: inherit;
  color: inherit;
  background: none;
  border: 0;
  padding: 0;
  margin: 0;
  outline: 0;
}

button {
  display: flex;
  align-items: center;
  justify-content: center;
  white-space: nowrap;
}

svg { display: block; flex: none; overflow: visible; }
.defs { position: absolute; width: 0; height: 0; }
.ln { fill: none; stroke: currentColor; stroke-width: 1; stroke-linecap: round; }
.thick { stroke-width: 1.5; }
.heavy { stroke-width: 2; }
.svgb { font-weight: 700; font-family: "Open Sans", sans-serif; }
.svgm { font-weight: 700; font-family: "Liberation Mono", monospace; }

/* Desktop and the windows behind the browser */
.desktop {
  position: relative;
  flex: 1;
  min-height: 0;
  display: flex;
  padding: 20px 19px 9px 0;
  background: linear-gradient(#828282, #666760 12%, #5a5b58 60%, #676967);
}
.wall-right { position: absolute; right: 0; top: 0; width: 20px; height: 100%; }
.wall-bottom {
  position: absolute;
  left: 0;
  bottom: 0;
  width: 100%;
  height: 10px;
  background: linear-gradient(90deg, #20201e, #2c2d2b 15%, #4a4c4b 30%, #555 40%, #666 98%);
}
.back-window { position: absolute; left: 0; background: #1d1d1d; border-radius: 8px 8px 0 0; overflow: hidden; }
.far { top: 10px; right: 37px; height: 30px; }
.far.back-window { left: 1600px; }
.red-close { display: block; width: 58px; height: 30px; margin-left: auto; background: #bd2a1c; }
.near {
  top: 1px;
  left: 8px;
  right: 276px;
  height: 30px;
  display: flex;
  justify-content: space-between;
  border: 1px solid #464644;
  background: #1e1e1e;
  color: #777;
}
.back-tab { width: 298px; height: 30px; margin: 10px 0 0 11px; border-radius: 8px; background: #282828; }

/* Browser window */
.browser {
  position: relative;
  flex: 1;
  min-width: 0;
  display: flex;
  flex-direction: column;
  overflow: hidden;
  border-radius: 0 10px 10px 0;
  border-top: 1px solid #4e4e50;
  background: #56575c;
  box-shadow: 0 0 14px #0006;
}
.tabs { display: flex; align-items: flex-end; height: 50px; padding-left: 5px; background: #38393c; border-bottom: 1px solid #2f3033; }
.ic { width: 44px; height: 40px; margin-right: 9px; }
.tab { display: flex; align-items: center; width: 300px; height: 40px; margin: 0 0 -1px -3px; padding: 0 14px; border-radius: 8px 8px 0 0; background: #56575c; }
.tab-title { flex: 1; margin-left: 12px; }
.newtab { width: 42px; height: 40px; }
.caption { display: flex; margin-left: auto; align-self: stretch; }
.caption button { width: 57px; }

.frame { flex: 1; min-height: 0; display: flex; }
.column { flex: 1; min-width: 0; display: flex; flex-direction: column; }

.address-row { display: flex; align-items: center; height: 48px; padding-left: 2px; }
.nav { width: 54px; height: 40px; }
.dim { color: #8b8c8f; }
.pill { flex: 1; display: flex; align-items: center; height: 38px; margin-left: 9px; padding: 0 8px 0 22px; border-radius: 19px; background: #47484b; font-size: 16px; }
.scheme { margin: 0 13px 0 11px; }
.url { flex: 1; min-width: 0; height: 20px; padding-left: 16px; border-left: 2px solid #8d8e90; font-size: 17px; }
.pill-btn { width: 46px; height: 38px; color: #97989a; }
.pill-btn:last-child { width: 42px; }
.tools { display: flex; width: 229px; padding-left: 6px; }
.tools button { flex: none; width: 57px; height: 40px; }

.bookmarks { display: flex; align-items: center; gap: 22px; height: 41px; padding: 0 0 4px 11px; border-bottom: 1px solid #85868a; }
.bookmarks a { display: flex; align-items: center; gap: 10px; color: #fff; text-decoration: none; white-space: nowrap; }
.bookmarks .site { padding-right: 2px; }
.bm-sep { width: 1px; height: 20px; margin: 0 -8px 0 -9px; background: #7d7e82; }

/* PDF viewer */
.viewer-wrap { flex: 1; min-height: 0; display: flex; }
.viewer { flex: 1; min-width: 0; display: flex; flex-direction: column; background: #333; }
.pdfbar { display: flex; height: 51px; background: #3b3b3b; border-bottom: 1px solid #4d4d4d; font-size: 17px; }
.pdf-group { display: flex; align-items: center; }
.side { flex: 1 1 0; width: 0; }
.pdf-group button { flex: none; height: 40px; }
.pdf-group .dim { color: #777; }
.pdf-group svg.dim { color: #aaa; }
.end { justify-content: flex-end; }
.end > :last-child { margin-right: 10px; }
.sep { flex: none; width: 1px; height: 20px; background: #6c6c6c; }
.gap14 { margin-left: 14px; }
.contents { width: 44px; margin-right: 5px; }
.w22 { width: 22px; }
.w36 { width: 36px; }
.w44 { width: 44px; }
.w50 { width: 50px; }
.w54 { width: 54px; }
.w56 { width: 56px; }
.draw { width: 117px; justify-content: flex-start; gap: 15px; padding-left: 24px; }
.read { padding-left: 20px; }
.pageno { display: flex; align-items: center; gap: 12px; padding: 0 16px 0 8px; font-size: 15px; }
.pageno input { width: 50px; height: 40px; border: 1px solid #757575; border-radius: 2px; text-align: center; }

.pages { flex: 1; min-height: 0; display: flex; flex-direction: column; align-items: center; padding-right: 8px; overflow: hidden; }
.page { flex: 1; width: 566px; padding: 10px 33px 0 45px; background: #fff; color: #000; font-family: "Liberation Sans", Arial, sans-serif; box-shadow: 0 0 4px #0008; }
.page.previous { flex: none; height: 23px; margin-bottom: 11px; }
.page h1 { margin: 0 0 10px; font-size: 13px; line-height: 20px; text-align: center; }
.page table { width: 100%; border-spacing: 0; table-layout: fixed; border-top: 1px solid #000; border-left: 1px solid #000; font-size: 10px; line-height: 11px; }
.num { width: 36px; }
.page td, .page th { height: 13px; padding: 0 0 0 5px; border: solid #000; border-width: 0 1px 1px 0; text-align: left; vertical-align: top; white-space: nowrap; }
.page tr > :first-child:not(.list) { padding-left: 20px; }
.page .t > * { height: 12px; }
.page .two > * { height: 24px; }
.page .tall > * { height: 25px; line-height: 12px; }
.page .ten > * { height: 22px; line-height: 10px; }
.page sup { line-height: 0; font-size: 10px; vertical-align: 4px; }
.page .glyph { color: #888; line-height: 0; }

.scroll { display: flex; flex-direction: column; align-items: center; width: 21px; padding: 5px 0 4px; background: #fcfcfc; }
.track { flex: 1; display: flex; flex-direction: column; padding: 4px 0; }
.above { flex: 289; }
.thumb { width: 11px; height: 21px; border-radius: 6px; background: #8b8b8b; }
.below { flex: 700; }

.sidebar { display: flex; flex-direction: column; align-items: center; width: 68px; }
.bing { width: 68px; height: 50px; }
.side-list { flex: 1; width: 100%; display: flex; flex-direction: column; border-left: 1px solid #85868a; }
.side-list button { height: 50px; }
.side-list button:last-child { margin-top: 5px; }
.side-foot { width: 100%; padding-bottom: 2px; border-left: 1px solid #85868a; }
.side-foot::before { content: ""; display: block; width: 36px; height: 1px; margin: 0 auto 4px; background: #8d8e92; }
.side-foot button { width: 100%; height: 50px; }

/* Taskbar */
.taskbar { position: relative; display: grid; grid-template-columns: 1fr auto 1fr; align-items: center; height: 60px; padding-bottom: 2px; border-top: 1px solid #444; background: #222; font-size: 15px; }
.weather { justify-self: start; gap: 7px; padding-left: 25px; }
.lines { display: flex; flex-direction: column; text-align: left; }
.soft { color: #ccc; }
.apps { display: flex; align-items: center; }
.apps > button { position: relative; width: 55px; height: 50px; }
.search { display: flex; align-items: center; width: 274px; height: 40px; margin: 0 3px 0 4px; padding: 0 12px 0 14px; border-radius: 20px; background: #3a3b3b; font-size: 16px; }
.search input { flex: 1; min-width: 0; margin-left: 11px; color: #ddd; }
.search input::placeholder { color: #d4d4d4; opacity: 1; }
.search > .ln { stroke-width: 2; color: #e4e4e4; }
.open::after, .active::after { content: ""; position: absolute; bottom: 1px; width: 8px; height: 4px; border-radius: 2px; background: #999; }
.active { border-radius: 6px; background: #2e2e2e; }
.apps > .active { width: 50px; margin: 0 2px 0 3px; }
.active::after { width: 20px; background: #aaa; }
.tray { justify-self: end; display: flex; align-items: center; padding-right: 24px; }
.tray > button { height: 50px; }
.tray > button:nth-child(-n+2) { width: 40px; }
.tray .lang, .tray .clock { flex-direction: column; }
.tray .lang { width: 55px; }
.tray .status { width: 98px; gap: 10px; }
.tray .clock { width: 89px; padding-left: 4px; align-items: flex-end; }
```
